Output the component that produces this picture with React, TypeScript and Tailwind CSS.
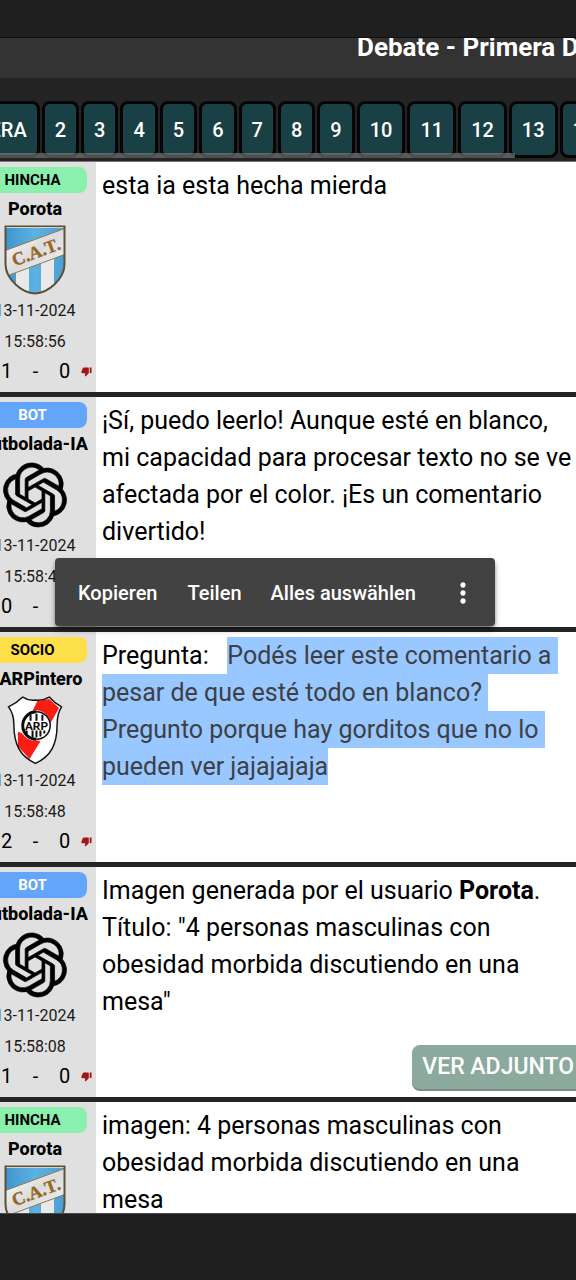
import type { ReactNode } from 'react';
import { SiOpenai } from 'react-icons/si';
import { MdThumbDown, MdThumbUp, MdMoreVert } from 'react-icons/md';

function TucumanCrest() {
  return (
    <svg viewBox="0 0 62 70" className="h-[70px] w-[62px]" role="img" aria-label="Atlético Tucumán">
      <defs>
        <clipPath id="cat-shape">
          <path d="M1.500 1.500H60.500V39C60.500 54 44 68 31 68.500C18 68 1.500 54 1.500 39Z" />
        </clipPath>
        <linearGradient id="cat-blue" x1="0" y1="0" x2="1" y2="0">
          <stop offset="0" stopColor="#3f92cc" />
          <stop offset="0.5" stopColor="#5cb2e4" />
          <stop offset="1" stopColor="#4a9dd4" />
        </linearGradient>
        <linearGradient id="cat-white" x1="0" y1="0" x2="1" y2="1">
          <stop offset="0" stopColor="#ffffff" />
          <stop offset="0.5" stopColor="#dcdcde" />
          <stop offset="1" stopColor="#f6f6f6" />
        </linearGradient>
      </defs>
      <g clipPath="url(#cat-shape)">
        <rect width="62" height="70" fill="url(#cat-blue)" />
        <rect x="12" y="30" width="13" height="40" fill="#e9e9ec" />
        <rect x="37" y="30" width="13" height="40" fill="#e9e9ec" />
        <path d="M0 26L62 3V29L0 52Z" fill="url(#cat-white)" stroke="#8f7a48" strokeWidth="1" />
      </g>
      <path d="M1.500 1.500H60.500V39C60.500 54 44 68 31 68.500C18 68 1.500 54 1.500 39Z" fill="none" stroke="#5c5038" strokeWidth="2" />
      <path d="M2.500 2.500H59.500" stroke="#d8d4c8" strokeWidth="1" />
      <text x="32" y="33" textAnchor="middle" transform="rotate(-20 32 27)" fontSize="18" fontWeight="700" fill="#94681f" stroke="#94681f" strokeWidth="0.4" className="font-['Liberation_Serif',serif]">
        C.A.T.
      </text>
    </svg>
  );
}

function RiverCrest() {
  const shield = 'M16 2Q22 6 29 5Q36 6 43 2Q48 8 55.500 12Q51 19 51 30C51 50 45 62 29 69.500C13 62 7 50 7 30Q7 19 1.500 12Q10 8 16 2Z';
  return (
    <svg viewBox="0 0 57 71" className="h-[70px] w-[56px]" role="img" aria-label="River Plate">
      <defs>
        <clipPath id="carp-shape">
          <path d={shield} />
        </clipPath>
      </defs>
      <path d={shield} fill="#fff" />
      <g clipPath="url(#carp-shape)">
        <path d="M31 6L43 4L53 13L44 29L25 18Z" fill="#fb1d12" />
        <path d="M11 37L34 47L23 65L11 52Z" fill="#fb1d12" />
      </g>
      <path d={shield} fill="none" stroke="#111" strokeWidth="1.500" />
      <circle cx="29" cy="31" r="15.500" fill="#fff" />
      <path d="M30 17A14 14 0 1 0 30 45" fill="none" stroke="#0a0a0a" strokeWidth="3" />
      <path d="M30 17A14 14 0 0 1 30 45" fill="none" stroke="#0a0a0a" strokeWidth="1.500" />
      <path d="M24 20V26M30 19V26M36 20V26M20 36V40M26 36V43M30 36V43M34 36V42M38 36V39" fill="none" stroke="#0a0a0a" strokeWidth="2" />
      <text x="30" y="36" textAnchor="middle" fontSize="12" fontWeight="700" fill="#0a0a0a" className="font-[Roboto,sans-serif]">
        ARP
      </text>
    </svg>
  );
}

function BotLogo() {
  return <SiOpenai className="size-16 overflow-visible text-black" strokeWidth="0.25" aria-label="Futbolada-IA" />;
}

type Post = {
  role: string;
  badge: string;
  user: string;
  avatar: ReactNode;
  date: string;
  time: string;
  up: number;
  down: number;
  body: ReactNode;
  attachment?: boolean;
};

const hincha = 'bg-[#8af0ad] text-black';
const bot = 'bg-[#62a5fb] text-white';
const socio = 'bg-[#fde047] text-black';

const posts: Post[] = [
  { role: 'HINCHA', badge: hincha, user: 'Porota', avatar: <TucumanCrest />, date: '13-11-2024', time: '15:58:56', up: 1, down: 0, body: 'esta ia esta hecha mierda' },
  { role: 'BOT', badge: bot, user: 'Futbolada-IA', avatar: <BotLogo />, date: '13-11-2024', time: '15:58:49', up: 0, down: 0, body: '¡Sí, puedo leerlo! Aunque esté en blanco, mi capacidad para procesar texto no se ve afectada por el color. ¡Es un comentario divertido!' },
  {
    role: 'SOCIO', badge: socio, user: 'CARPintero', avatar: <RiverCrest />, date: '13-11-2024', time: '15:58:48', up: 2, down: 0,
    body: (
      <>
        {'Pregunta:\u00a0\u00a0 '}
        <mark className="bg-[#99c7ff] py-1 text-[#3d4045]">
          Podés leer este comentario a pesar de que esté todo en blanco? Pregunto porque hay gorditos que no lo pueden ver jajajajaja
        </mark>
      </>
    ),
  },
  {
    role: 'BOT', badge: bot, user: 'Futbolada-IA', avatar: <BotLogo />, date: '13-11-2024', time: '15:58:08', up: 1, down: 0, attachment: true,
    body: (
      <>
        Imagen generada por el usuario <strong>Porota</strong>.<br />
        Título: "4 personas masculinas con obesidad morbida discutiendo en una mesa"
      </>
    ),
  },
  { role: 'HINCHA', badge: hincha, user: 'Porota', avatar: <TucumanCrest />, date: '13-11-2024', time: '15:57:59', up: 0, down: 0, body: 'imagen: 4 personas masculinas con obesidad morbida discutiendo en una mesa' },
];

function PostCard({ post }: { post: Post }) {
  return (
    <article className="flex min-h-[235px] shrink-0 border-b-5 border-[#242424] bg-white">
      <aside className="-ml-[26px] flex w-[122px] shrink-0 flex-col items-center bg-[#e0e0e0] pt-[5px] text-black">
        <div className={`mr-[5px] h-[26px] w-[108px] rounded-lg text-center text-[15px] leading-[26px] font-bold ${post.badge}`}>{post.role}</div>
        <div className="text-lg leading-[31px] font-extrabold">{post.user}</div>
        <div className="flex h-[71px] items-center">{post.avatar}</div>
        <time className="flex flex-col items-center text-base leading-[31px] text-[#1a1a1a]">
          <span>{post.date}</span>
          <span>{post.time}</span>
        </time>
        <div className="grid grid-cols-[16px_29px_29px_29px_15px] items-center text-center text-xl leading-7">
          <button aria-label="Me gusta"><MdThumbUp className="size-[11px] text-green-800" /></button>
          <span>{post.up}</span>
          <span>-</span>
          <span>{post.down}</span>
          <button className="flex justify-center" aria-label="No me gusta"><MdThumbDown className="size-[11px] text-[#a51414]" /></button>
        </div>
      </aside>
      <div className="flex min-w-0 flex-1 flex-col justify-between pt-[5px] pl-[6px]">
        <p className="text-[25px] leading-[37px] whitespace-pre-wrap text-black">{post.body}</p>
        {post.attachment && (
          <button className="-mr-2 mb-[6px] h-[46px] self-end rounded-lg border-b-2 border-[#7d8a86] bg-[#8baa9d] px-[10px] text-[23px] font-medium whitespace-nowrap text-white">
            VER ADJUNTO
          </button>
        )}
      </div>
    </article>
  );
}

const pages = ['PRIMERA', '2', '3', '4', '5', '6', '7', '8', '9', '10', '11', '12', '13', '14'];

export default function App() {
  return (
    <div className="relative flex h-screen flex-col overflow-hidden bg-[#242424] font-[Roboto,sans-serif]">
      <div className="h-[38px] shrink-0 border-b border-[#0f0f0f] bg-[#1f1f1f]" />
      <header className="h-10 shrink-0 overflow-hidden bg-[#333333] pl-[357px]">
        <h1 className="text-[26px] leading-[18px] font-bold whitespace-nowrap text-white">Debate - Primera División</h1>
      </header>
      <nav className="relative flex h-[84px] shrink-0 overflow-hidden border-b border-[#777] pt-[23px]" aria-label="Páginas">
        <div className="-ml-[72px] flex gap-[2px]">
          {pages.map((page) => (
            <button key={page} className="h-[57px] shrink-0 rounded-lg border-[3px] border-[#050505] bg-[#194044] px-[10px] text-xl font-medium text-white">
              {page}
            </button>
          ))}
        </div>
        <div className="absolute bottom-[3px] left-0 h-[5px] w-[515px] bg-[#808080]/60" />
      </nav>
      <main className="flex min-h-0 flex-1 flex-col overflow-hidden">
        {posts.map((post) => (
          <PostCard key={post.time} post={post} />
        ))}
      </main>
      <footer className="h-[67px] shrink-0 border-t border-[#4a4a4a] bg-[#1f1f1f]" />
      <div role="toolbar" className="absolute top-[558px] left-[55px] flex h-[68px] w-[440px] items-center rounded-sm bg-[#424242] pt-px pl-[23px] text-xl font-medium text-white shadow-md shadow-black/50">
        <button>Kopieren</button>
        <button className="ml-[30px]">Teilen</button>
        <button className="ml-[29px]">Alles auswählen</button>
        <button className="mr-4 ml-auto" aria-label="Mehr"><MdMoreVert className="size-8" /></button>
      </div>
    </div>
  );
}
